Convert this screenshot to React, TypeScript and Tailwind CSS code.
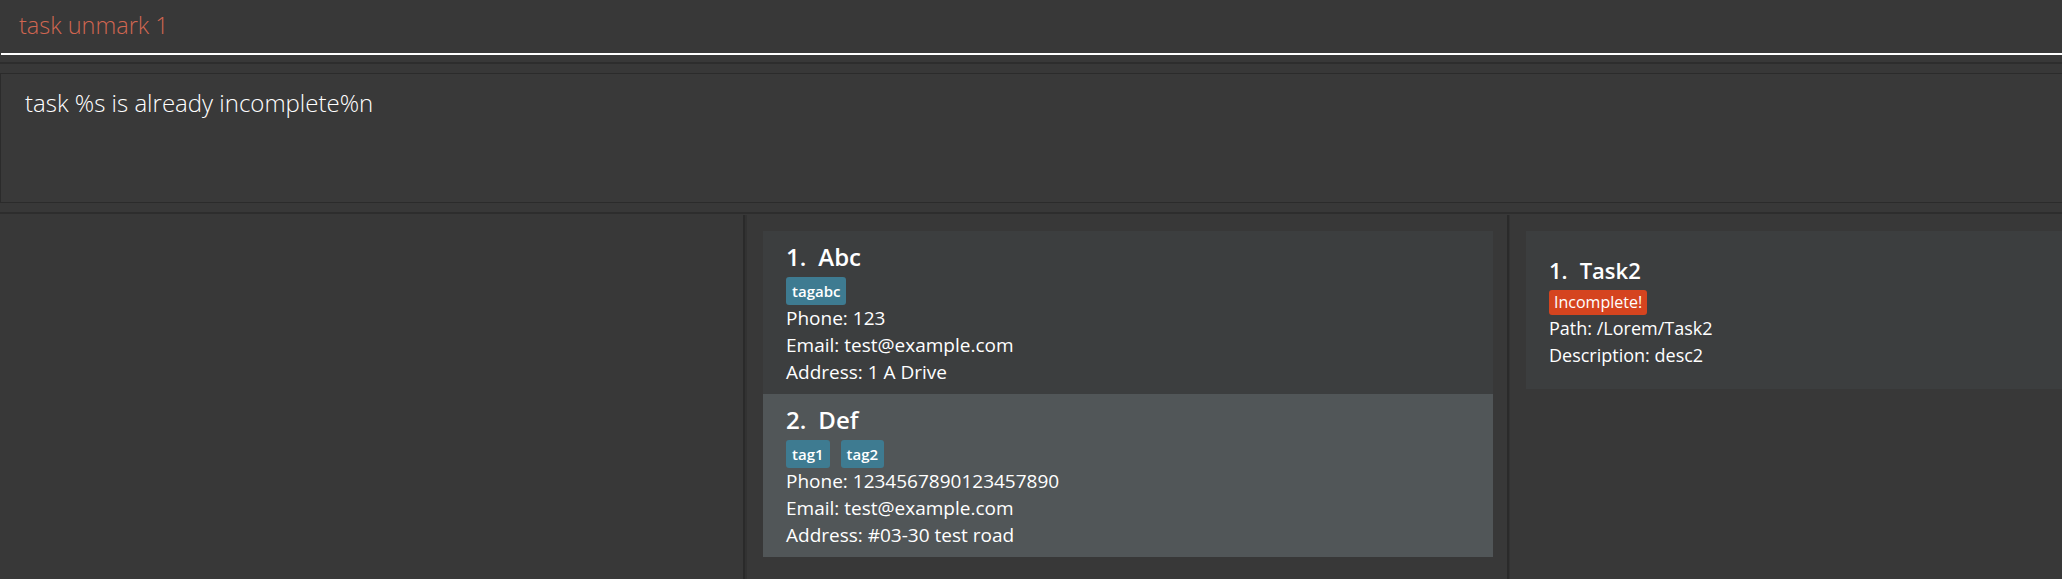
import React from 'react'

interface Person {
  id: number
  name: string
  tags: string[]
  phone: string
  email: string
  address: string
}

interface Task {
  id: number
  name: string
  done: boolean
  path: string
  description: string
}

const persons: Person[] = [
  { id: 1, name: 'Abc', tags: ['tagabc'], phone: '123', email: 'test@example.com', address: '1 A Drive' },
  {
    id: 2,
    name: 'Def',
    tags: ['tag1', 'tag2'],
    phone: '1234567890123457890',
    email: 'test@example.com',
    address: '#03-30 test road',
  },
]

const tasks: Task[] = [{ id: 1, name: 'Task2', done: false, path: '/Lorem/Task2', description: 'desc2' }]

const font = { fontFamily: '"Open Sans", "Noto Sans", sans-serif' }

function PersonCard({ person, index }: { person: Person; index: number }) {
  // even rows darker, odd rows lighter (like the javafx list)
  const bg = index % 2 === 0 ? 'bg-[#3c3e3f]' : 'bg-[#515658]'
  return (
    <div className={`${bg} h-[163px] pl-[23px] pt-[10px] text-white`}>
      <div className="flex text-[24px] leading-[32px] font-semibold">
        <span>{person.id}.</span>
        <span className="ml-3">{person.name}</span>
      </div>
      <div className="mt-1 flex gap-[11px]">
        {person.tags.map((tag) => (
          <span
            key={tag}
            className="h-[28px] rounded-[3px] bg-[#3e7b91] px-[6px] text-[15px] leading-[28px] font-semibold text-white"
          >
            {tag}
          </span>
        ))}
      </div>
      <div className="text-[19px] leading-[27px]">
        <div>Phone: {person.phone}</div>
        <div>Email: {person.email}</div>
        <div>Address: {person.address}</div>
      </div>
    </div>
  )
}

function TaskCard({ task }: { task: Task }) {
  return (
    <div className="h-[158px] bg-[#3c3e3f] pl-[23px] pt-6 text-white">
      <div className="flex text-[22px] leading-[30px] font-semibold">
        <span>{task.id}.</span>
        <span className="ml-3">{task.name}</span>
      </div>
      <div className="mt-[5px] flex">
        <span className="h-[25px] rounded-[3px] bg-[#d5441f] px-[5px] text-[16px] leading-[25px] text-white">
          {task.done ? 'Complete!' : 'Incomplete!'}
        </span>
      </div>
      <div className="text-[18px] leading-[27px]">
        <div>Path: {task.path}</div>
        <div>Description: {task.description}</div>
      </div>
    </div>
  )
}

export default function App() {
  return (
    <div className="flex h-[579px] w-[2062px] flex-col overflow-hidden bg-[#383838]" style={font}>
      {/* command box */}
      <div className="h-[53px] pl-[19px] pt-[9px] text-[23.5px] leading-[33px] font-light text-[#d06651]">
        task unmark 1
      </div>
      <div className="ml-[1px] h-[2px] bg-white" />
      <div className="h-[7px]" />
      <div className="h-[2px] bg-[#2d2d2d]" />
      <div className="h-[9px]" />

      {/* result display */}
      <div className="h-[130px] border-y border-l border-[#2b2b2b] bg-[#393939] pl-[24px] pt-[12px] text-[24px] leading-[33px] font-light text-white">
        task %s is already incomplete%n
      </div>
      <div className="h-[9px]" />
      <div className="h-[2px] bg-[#2d2d2d]" />
      <div className="h-[1px]" />

      {/* lists */}
      <div className="flex flex-1">
        <div className="w-[743px]" />
        <div className="w-[4px] border-l-2 border-[#2a2a2a] bg-[#323232]" />
        <div className="flex w-[760px] flex-col pl-4 pr-[14px] pt-4">
          {persons.map((p, i) => (
            <PersonCard key={p.id} person={p} index={i} />
          ))}
        </div>
        <div className="w-[3px] border-l-2 border-[#2a2a2a] bg-[#323232]" />
        <div className="flex flex-1 flex-col pl-4 pt-4">
          {tasks.map((t) => (
            <TaskCard key={t.id} task={t} />
          ))}
        </div>
      </div>
    </div>
  )
}
